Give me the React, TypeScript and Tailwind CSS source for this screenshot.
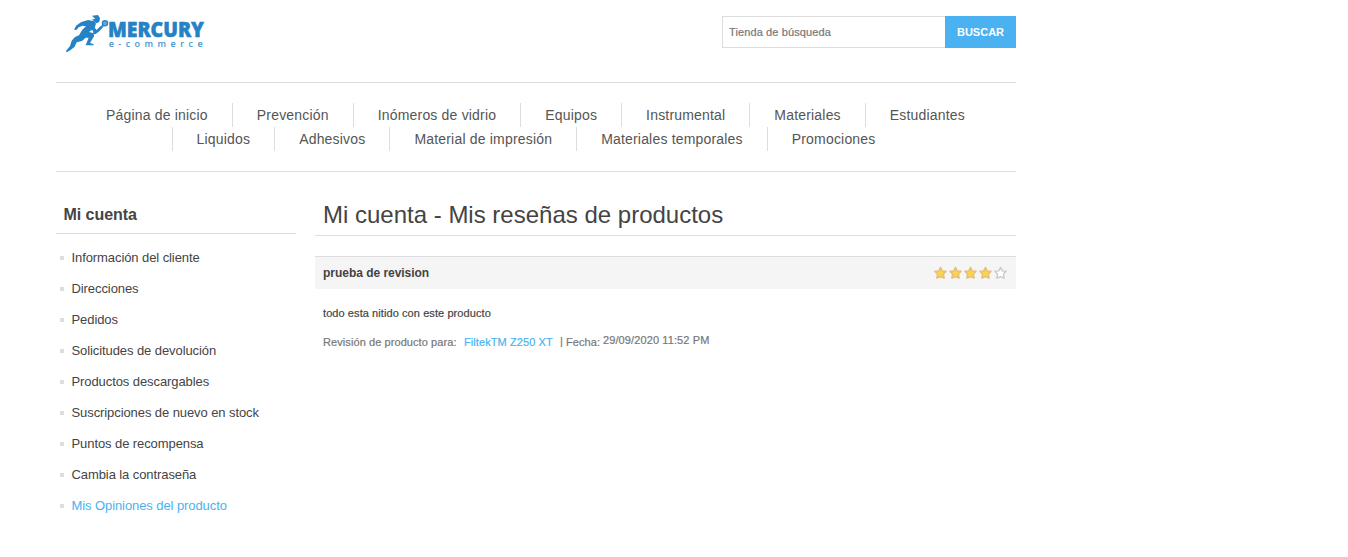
import type { ReactNode } from "react";

const NAV = [
  "Página de inicio",
  "Prevención",
  "Inómeros de vidrio",
  "Equipos",
  "Instrumental",
  "Materiales",
  "Estudiantes",
  "Liquidos",
  "Adhesivos",
  "Material de impresión",
  "Materiales temporales",
  "Promociones",
];

const ACCOUNT = [
  "Información del cliente",
  "Direcciones",
  "Pedidos",
  "Solicitudes de devolución",
  "Productos descargables",
  "Suscripciones de nuevo en stock",
  "Puntos de recompensa",
  "Cambia la contraseña",
  "Mis Opiniones del producto",
];

function Logo() {
  return (
    <svg width="170" height="60" viewBox="0 0 170 60" className="block" fill="#2482c5" role="img" aria-label="Mercury e-commerce">
      <g transform="scale(0.33333)">
        <path d="M126 32 L144 30 L150 40 L148 51 L139 55 L134 50 L126 43 L136 42 Z" />
        <path d="M134 49 L114 45 L94 51 L78 62 L72 75 L80 74 L86 67 L98 62 L108 64 L97 74 L87 91 L75 96 L65 107 L60 123 L48 138 L50 142 L61 136 L74 125 L80 112 L96 108 L107 98 L116 98 L110 113 L107 121 L131 121 L130 117 L120 114 L133 92 L129 84 L117 81 L126 74 L130 80 L129 86 L136 88 L149 78 L158 67 L151 64 L140 75 L134 68 L138 56 Z" />
        <circle cx="165" cy="55" r="8" fill="#5fa5d6" stroke="#2482c5" strokeWidth="3.5" />
        <path d="M157 59 L161 64 L151 73 L147 70 Z" />
      </g>
      <text x="58" y="32.1" fontSize="20.4" fontWeight="800" fontFamily="'Open Sans', sans-serif" textLength="96" lengthAdjust="spacingAndGlyphs" stroke="#2482c5" strokeWidth="0.5">MERCURY</text>
      <text x="58.7" y="41.5" fontSize="9" fontFamily="'Open Sans', sans-serif" fontWeight="600" textLength="94" opacity="0.85">e-commerce</text>
    </svg>
  );
}

function Star({ filled }: { filled: boolean }) {
  return (
    <svg width="15" height="14" viewBox="0 0 15 14" className="block">
      <path
        d="M7.5 1.4 L9.2 4.9 L13.1 5.2 L10.5 8.1 L11.2 12.2 L7.5 10.6 L3.8 12.2 L4.5 8.1 L1.9 5.2 L5.8 4.9 Z"
        fill={filled ? "#f6d552" : "#ffffff"}
        stroke={filled ? "#e9b978" : "#c8c8c8"}
        strokeWidth="1.3"
        strokeLinejoin="round"
      />
    </svg>
  );
}

function AccountLink({ active, children }: { active: boolean; children: ReactNode }) {
  return (
    <li className="flex h-[31px] items-center pl-1">
      <span className="mr-[7.5px] size-1 bg-[#ddd]" />
      <a className={active ? "text-[#4ab2f1]" : "text-[#444]"}>{children}</a>
    </li>
  );
}

export default function App() {
  return (
    <div className="h-[557px] overflow-hidden bg-white font-['Liberation_Sans',Arial,sans-serif] text-[#444]">
      <div className="ml-14 w-[960px]">
        <header className="flex h-[82px] items-start justify-between">
          <div className="-ml-1.5 pt-[5px]">
            <Logo />
          </div>
          <form className="mt-4 flex h-8 text-[11px]">
            <input
              className="w-[223px] border border-r-0 border-[#ddd] pl-1.5 text-[11px] tracking-[0.12px] text-[#777] outline-none [-webkit-text-stroke:0.2px] placeholder:text-[#777]"
              placeholder="Tienda de búsqueda"
            />
            <button type="button" className="w-[71px] bg-[#4ab2f1] font-bold text-white">
              BUSCAR
            </button>
          </form>
        </header>

        <nav className="h-[90px] border-y border-[#ddd] pt-5">
          <ul className="flex flex-wrap justify-center pr-px">
            {NAV.map((label) => (
              <li key={label} className="h-6 border-l border-[#ddd] px-6 text-sm leading-6 tracking-[0.185px] text-[#555] first:border-l-0">
                {label}
              </li>
            ))}
          </ul>
        </nav>

        <div className="flex justify-between">
          <aside className="w-60">
            <h2 className="h-[62px] border-b border-[#ddd] pt-[31px] pl-[7.5px] text-base leading-6 font-bold tracking-[-0.04px]">Mi cuenta</h2>
            <ul className="pt-2 text-[13px] tracking-[-0.085px]">
              {ACCOUNT.map((label, i) => (
                <AccountLink key={label} active={i === ACCOUNT.length - 1}>
                  {label}
                </AccountLink>
              ))}
            </ul>
          </aside>

          <main className="w-[701px]">
            <h1 className="h-16 border-b border-[#ddd] pt-[27px] pl-2 text-2xl leading-8">Mi cuenta - Mis reseñas de productos</h1>
            <section className="mt-5">
              <div className="flex h-[33px] items-center justify-between border-t border-[#ddd] bg-[#f5f5f5] pr-[8.5px] pl-2">
                <strong className="text-xs tracking-[-0.03px]">prueba de revision</strong>
                <div className="flex">
                  {[1, 2, 3, 4, 5].map((n) => (
                    <Star key={n} filled={n < 5} />
                  ))}
                </div>
              </div>
              <p className="mt-[17px] pl-2 text-[11px] leading-[14px] tracking-[0.08px] [-webkit-text-stroke:0.2px]">todo esta nitido con este producto</p>
              <div className="mt-[13px] flex pl-2 text-[11px] leading-4 tracking-[0.08px] text-[#777] [-webkit-text-stroke:0.2px]">
                <span className="mt-px w-[141px]">Revisión de producto para:</span>
                <a className="mt-px w-[96px] text-[#4ab2f1]">FiltekTM Z250 XT</a>
                <span className="w-[6px]">|</span>
                <span className="mt-px w-[37px]">Fecha:</span>
                <span className="-mt-px tracking-[0.11px]">29/09/2020 11:52 PM</span>
              </div>
            </section>
          </main>
        </div>
      </div>
    </div>
  );
}
